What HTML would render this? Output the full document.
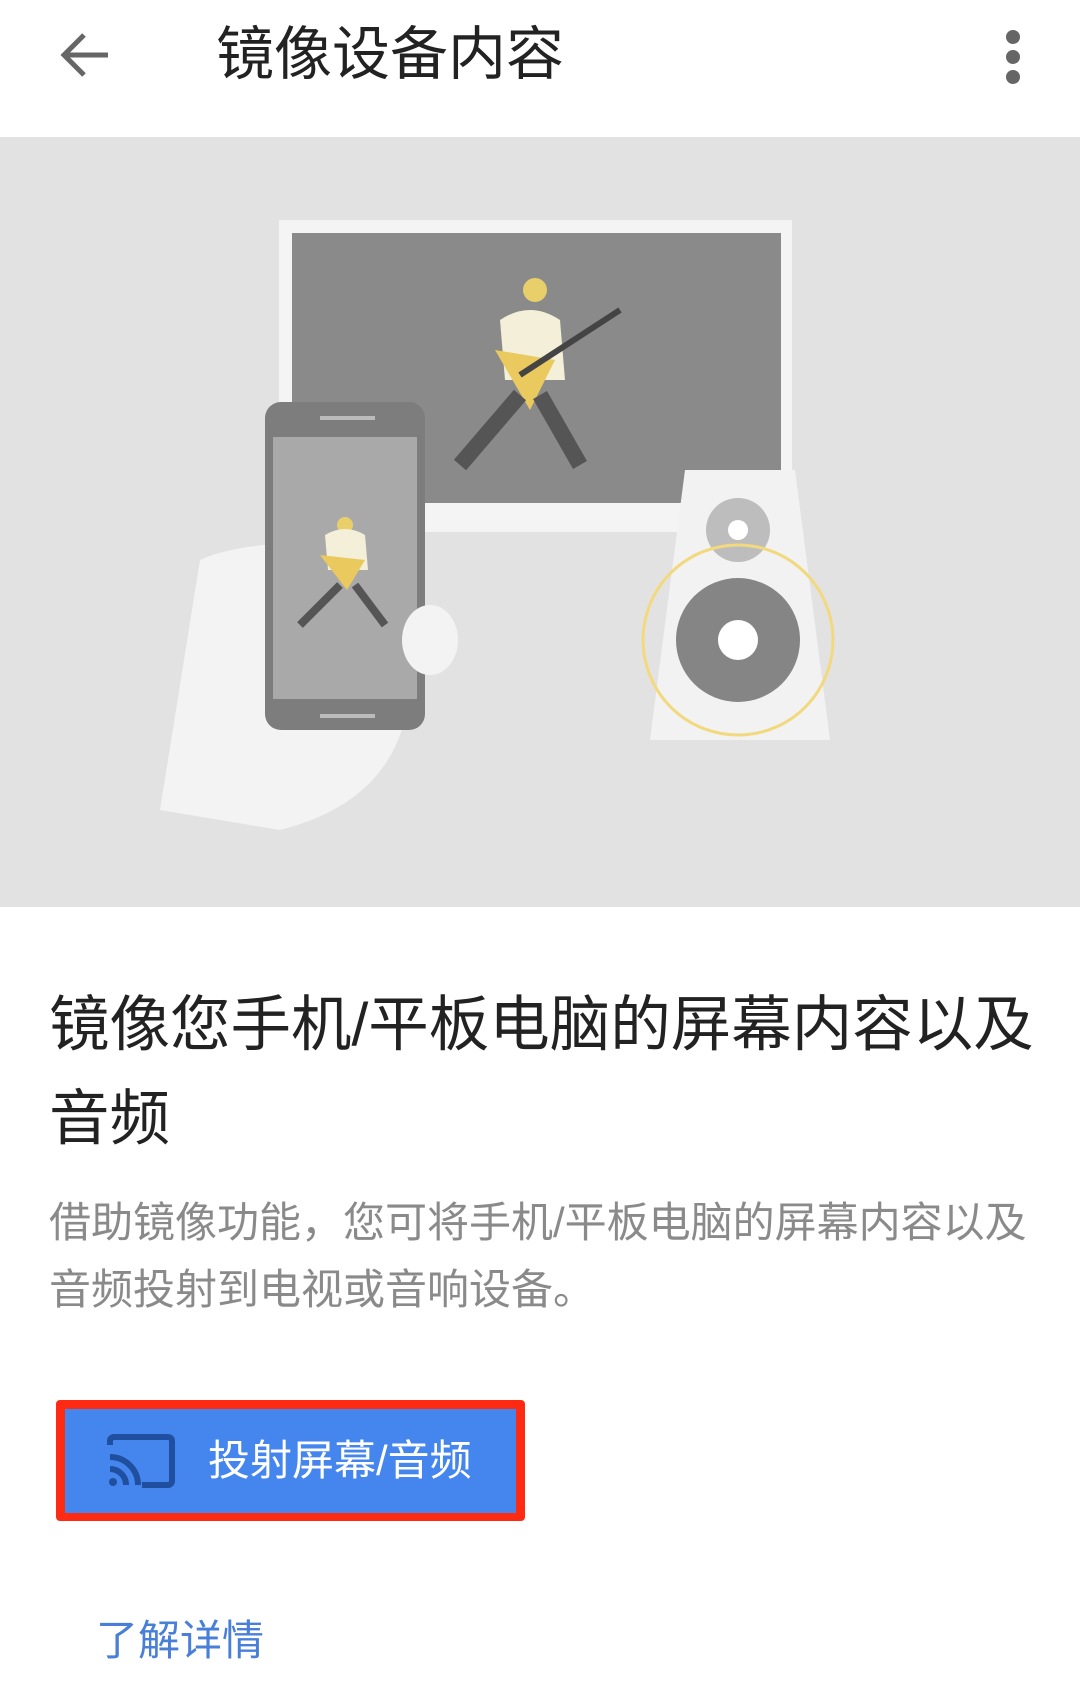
<!DOCTYPE html>
<html><head><meta charset="utf-8"><style>
*{margin:0;padding:0;box-sizing:border-box}
body{width:1080px;height:1696px;background:#fff;position:relative;overflow:hidden;font-family:"Liberation Sans","Noto Sans CJK SC",sans-serif}
.a{position:absolute}
</style></head><body>
<svg class="a" style="left:56px;top:30px" width="56" height="50" viewBox="0 0 56 50"><path d="M52 25H8M28 5L8 25l20 20" stroke="#666" stroke-width="5" fill="none"/></svg>
<div class="a" style="left:216px;top:19px;font-size:58px;color:#222;line-height:72px">镜像设备内容</div>
<div class="a" style="left:1006px;top:30px;width:14px;height:14px;border-radius:50%;background:#666"></div>
<div class="a" style="left:1006px;top:50px;width:14px;height:14px;border-radius:50%;background:#666"></div>
<div class="a" style="left:1006px;top:70px;width:14px;height:14px;border-radius:50%;background:#666"></div>

<div class="a" style="left:0;top:137px;width:1080px;height:770px;background:#e2e2e2"></div>
<svg class="a" style="left:0;top:137px" width="1080" height="770" viewBox="0 137 1080 770">
<rect x="279" y="220" width="513" height="312" fill="#f4f4f4"/>
<rect x="292" y="233" width="489" height="270" fill="#8a8a8a"/>
<circle cx="535" cy="290" r="12" fill="#e9cf6a"/>
<path d="M500 320q30-20 60 0l5 60h-60z" fill="#f3efd8"/>
<path d="M495 350l60 10-25 50z" fill="#eac95e"/>
<path d="M520 395l-60 70M540 395l40 70" stroke="#555" stroke-width="16"/>
<path d="M520 375l100-65" stroke="#444" stroke-width="6"/>
<path d="M685 470h110l35 270h-180z" fill="#f2f2f2"/>
<circle cx="738" cy="530" r="32" fill="#bdbdbd"/><circle cx="738" cy="530" r="10" fill="#fff"/>
<circle cx="738" cy="640" r="62" fill="#858585"/><circle cx="738" cy="640" r="20" fill="#fff"/>
<circle cx="738" cy="640" r="95" fill="none" stroke="#f2d97e" stroke-width="3"/>
<path d="M200 560q40-20 170-20l40 150q-10 110-130 140l-120-20z" fill="#f3f3f3"/>
<rect x="265" y="402" width="160" height="328" rx="16" fill="#7d7d7d"/>
<rect x="273" y="437" width="144" height="262" fill="#a9a9a9"/>
<rect x="320" y="416" width="55" height="4" fill="#bbb"/>
<rect x="320" y="714" width="55" height="4" fill="#bbb"/>
<circle cx="345" cy="525" r="8" fill="#e9cf6a"/>
<path d="M325 535q20-12 40 0l3 35h-40z" fill="#f3efd8"/>
<path d="M320 555l45 5-18 30z" fill="#eac95e"/>
<path d="M340 585l-40 40M355 585l30 40" stroke="#555" stroke-width="8"/>
<ellipse cx="430" cy="640" rx="28" ry="35" fill="#f3f3f3"/>
</svg>

<div class="a" style="left:49px;top:977px;width:1040px;font-size:60.5px;color:#222;line-height:94px">镜像您手机/平板电脑的屏幕内容以及<br>音频</div>
<div class="a" style="left:49px;top:1189px;width:1040px;font-size:42px;color:#8a8a8a;line-height:67px">借助镜像功能，您可将手机/平板电脑的屏幕内容以及<br>音频投射到电视或音响设备。</div>

<div class="a" style="left:56px;top:1400px;width:469px;height:121px;border-radius:4px;background:#ff2a12"></div>
<div class="a" style="left:65px;top:1409px;width:451px;height:104px;background:#4485ee"></div>
<svg class="a" style="left:106px;top:1433px" width="70" height="56" viewBox="0 0 70 56"><path d="M4 12V8a4 4 0 0 1 4-4h54a4 4 0 0 1 4 4v40a4 4 0 0 1-4 4H36" stroke="#1f4f9e" stroke-width="6" fill="none"/><path d="M4 24a28 28 0 0 1 28 28M4 36a16 16 0 0 1 16 16" stroke="#1f4f9e" stroke-width="6" fill="none"/><circle cx="7" cy="49" r="4" fill="#1f4f9e"/></svg>
<div class="a" style="left:208px;top:1435px;font-size:42px;color:#fff;line-height:52px">投射屏幕/音频</div>

<div class="a" style="left:96px;top:1615px;font-size:42px;color:#4a7fd8;line-height:52px">了解详情</div>
</body></html>
